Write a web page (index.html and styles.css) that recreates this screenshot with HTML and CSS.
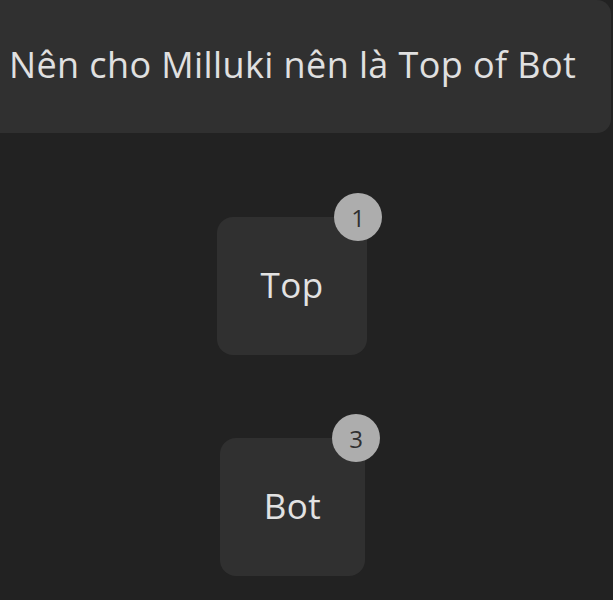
FILE: index.html
```html
<!DOCTYPE html>
<html lang="vi">
<head>
<meta charset="utf-8">
<link rel="stylesheet" href="styles.css">
</head>
<body>
<div class="banner"><span class="title">Nên cho Milluki nên là Top of Bot</span></div>
<div class="options">
  <div class="option"><span class="label">Top</span><span class="badge">1</span></div>
  <div class="option option-bot"><span class="label">Bot</span><span class="badge">3</span></div>
</div>
</body>
</html>
```
FILE: styles.css
```css
html, body {
  margin: 0;
  padding: 0;
  background: #222222;
  height: 100%;
  overflow: hidden;
}
body {
  font-family: "Open Sans", "Noto Sans", sans-serif;
  color: #e0e0e0;
}
.banner {
  box-sizing: border-box;
  width: 611px;
  height: 133px;
  background: #303030;
  border-radius: 0 14px 14px 0;
  display: flex;
  align-items: center;
  padding-left: 9px;
  padding-bottom: 4px;
}
.title {
  font-size: 36px;
  letter-spacing: 0.4px;
  white-space: nowrap;
}
.options {
  display: flex;
  flex-direction: column;
  align-items: flex-start;
  gap: 83px;
  padding-top: 84px;
  padding-left: 217px;
}
.option {
  position: relative;
  box-sizing: border-box;
  width: 150px;
  height: 138px;
  background: #303030;
  border-radius: 16px;
  display: flex;
  align-items: center;
  justify-content: center;
}
.option-bot {
  margin-left: 3px;
  width: 145px;
}
.label {
  font-size: 35px;
  letter-spacing: 0.5px;
  color: #e2e2e2;
  padding-bottom: 4px;
}
.badge {
  position: absolute;
  top: -24px;
  right: -15px;
  width: 48px;
  height: 48px;
  border-radius: 50%;
  background: #adadad;
  color: #303030;
  font-size: 24px;
  display: flex;
  align-items: center;
  justify-content: center;
}
```
